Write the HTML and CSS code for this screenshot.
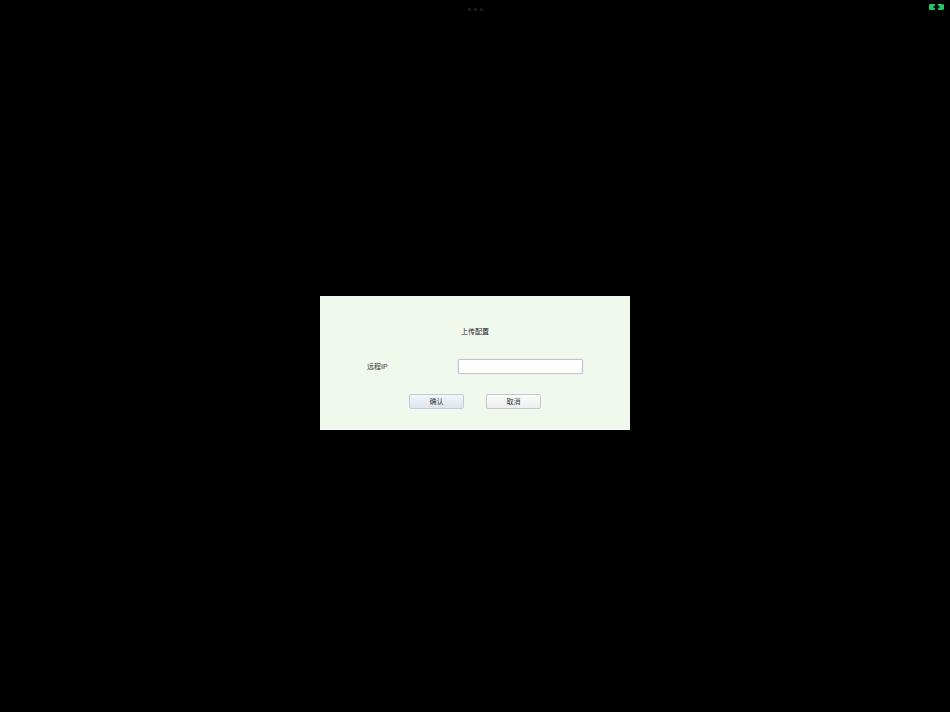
FILE: index.html
```html
<!DOCTYPE html>
<html lang="zh-CN">
<head>
    <meta charset="UTF-8">
    <title>上传配置</title>
    <link rel="stylesheet" href="styles.css">
</head>
<body>

<div class="status-bar">
    <div class="status-side"></div>
    <div class="dots">
        <span></span><span></span><span></span>
    </div>
    <div class="status-side battery-wrap">
        <svg class="battery" width="15" height="6" viewBox="0 0 15 6">
            <path fill="#22c55e" d="M0 1l1-1h5v1.500L4 3l2 1.500V6H1L0 5zM9 0h5l1 1v4l-1 1H9V4.500L11 3 9 1.500z"/>
        </svg>
    </div>
</div>

<div class="dialog">
    <h2 class="dialog-title">上传配置</h2>
    <div class="form-row">
        <label class="form-label" for="remote-ip">远程IP</label>
        <input class="form-input" id="remote-ip" type="text">
    </div>
    <div class="actions">
        <button class="btn btn-primary">确认</button>
        <button class="btn">取消</button>
    </div>
</div>

</body>
</html>
```

FILE: styles.css
```css
html, body {
    height: 100%;
}
body {
    margin: 0;
    background-color: #000;
    font-family: "Liberation Sans", "Noto Sans CJK SC", sans-serif;
    display: flex;
    flex-direction: column;
    align-items: center;
    overflow: hidden;
}
.status-bar {
    display: flex;
    align-items: center;
    justify-content: space-between;
    align-self: stretch;
    height: 16px;
    padding: 0 6px;
}
.status-side {
    width: 60px;
    display: flex;
    justify-content: flex-end;
}
.battery {
    display: block;
    margin-top: -3px;
}
.dots {
    display: flex;
    gap: 3px;
    margin-top: 2px;
}
.dots span {
    width: 3px;
    height: 3px;
    border-radius: 50%;
    background: #222;
}
.dialog {
    margin-top: 280px;
    width: 310px;
    height: 134px;
    box-sizing: border-box;
    background: #f1f8ed;
    padding-top: 31px;
    display: flex;
    flex-direction: column;
    align-items: center;
}
.dialog-title {
    margin: 0;
    font-size: 7px;
    font-weight: normal;
    line-height: 10px;
    color: #222;
}
.form-row {
    display: flex;
    align-items: center;
    margin-top: 22px;
    align-self: stretch;
    padding-left: 47px;
}
.form-label {
    width: 91px;
    margin-bottom: 2px;
    font-size: 7px;
    color: #333;
}
.form-input {
    width: 125px;
    height: 15px;
    box-sizing: border-box;
    background: #fff;
    border: 1px solid #c4c6c4;
    border-radius: 2px;
    box-shadow: 0 0 1px #b8bab8;
    padding: 0;
    outline: none;
}
.actions {
    display: flex;
    gap: 22px;
    margin-top: 20px;
}
.btn {
    width: 55px;
    height: 15px;
    box-sizing: border-box;
    border: 1px solid #c6c8ca;
    border-radius: 2px;
    background: linear-gradient(#fbfbfb, #eeeeee);
    color: #333;
    font-family: inherit;
    font-size: 7px;
    padding: 0 0 2px;
}
.btn-primary {
    border-color: #c3cbd8;
    background: linear-gradient(#f3f5f9, #dfe4ee);
}
```
